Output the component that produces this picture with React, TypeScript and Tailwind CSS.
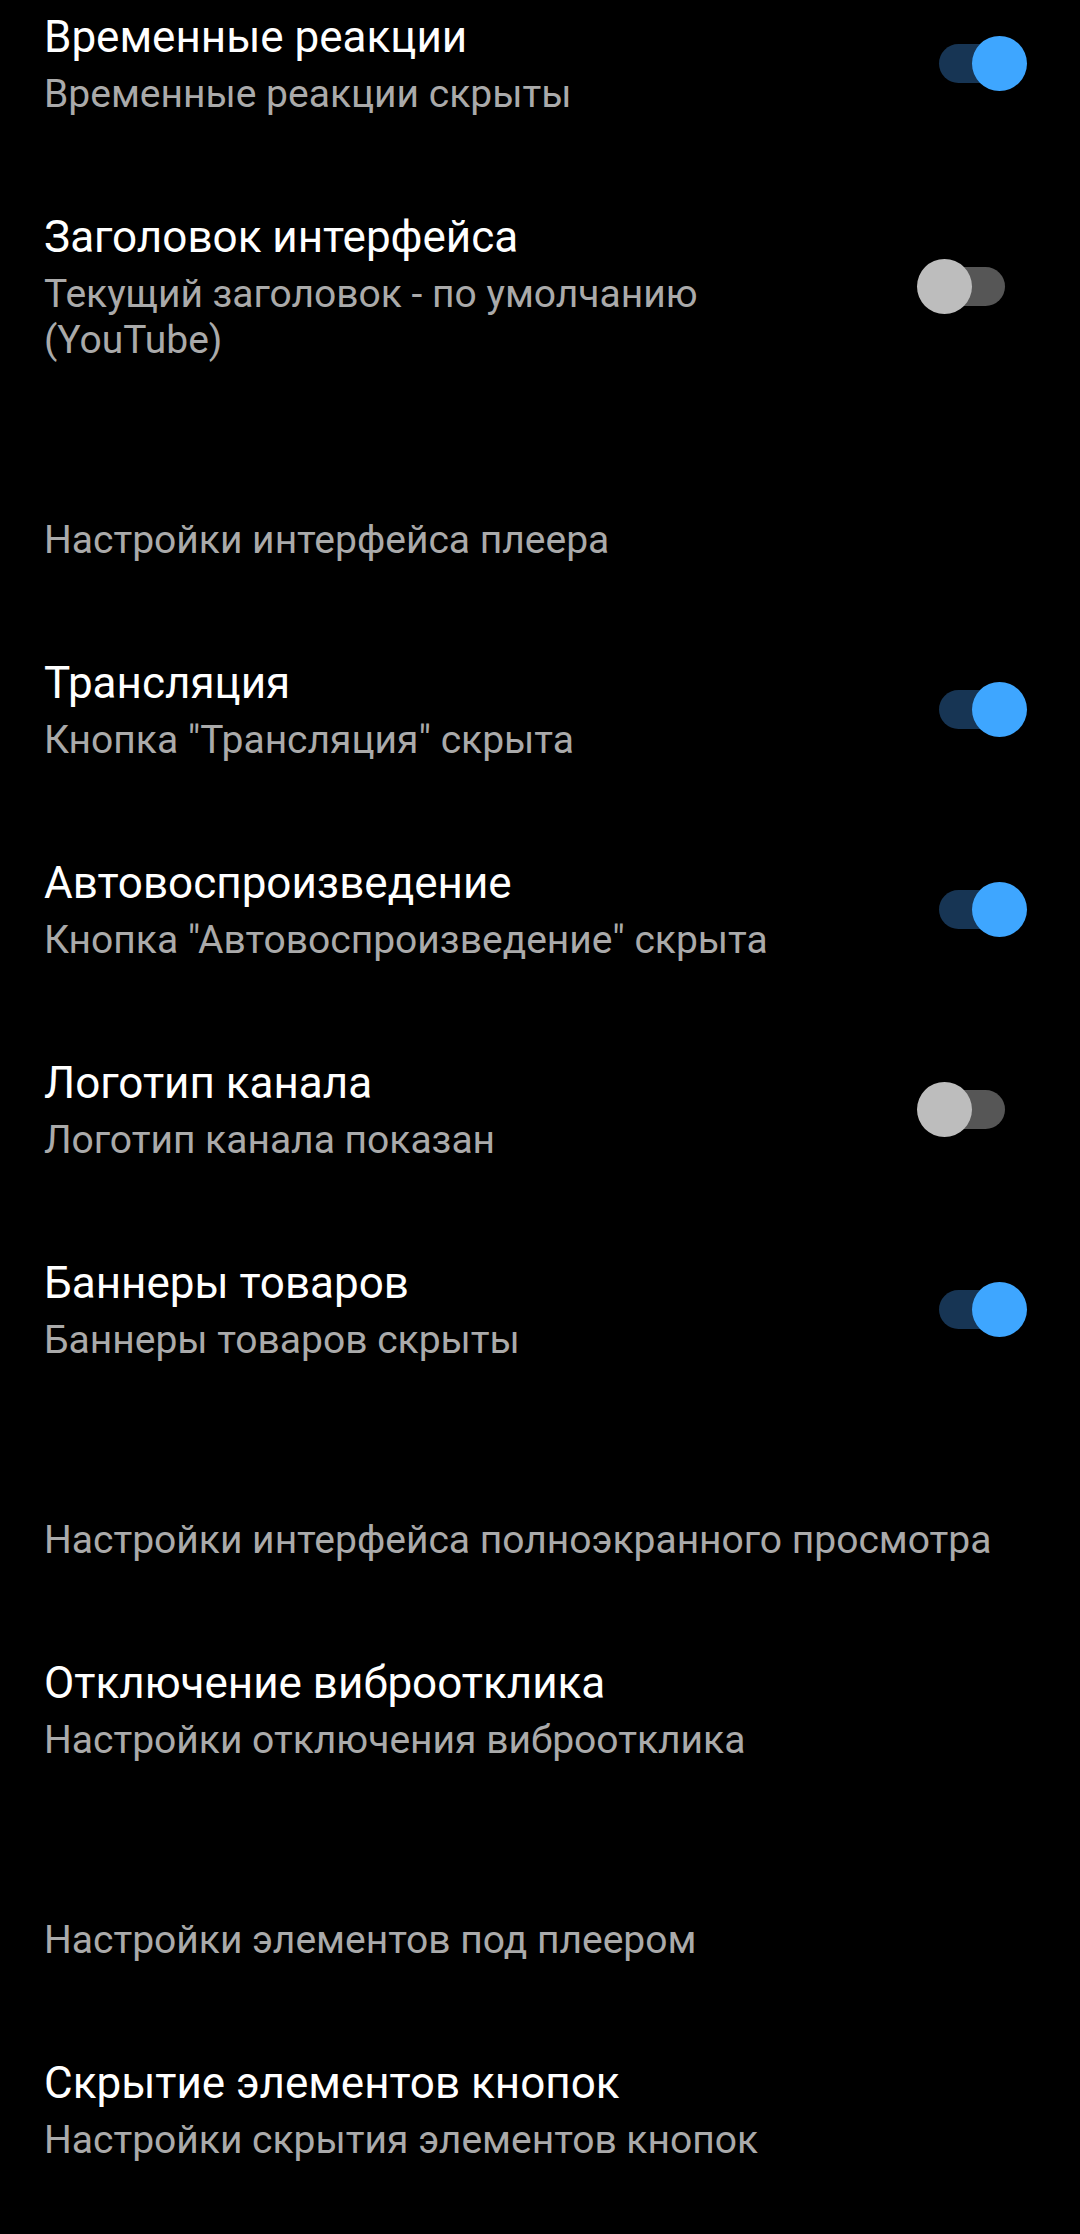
import React from "react";

type Row = {
  kind: "row";
  title: string;
  sub: string;
  toggle?: "on" | "off";
};
type Header = { kind: "header"; text: string };

const items: (Row | Header)[] = [
  { kind: "row", title: "Временные реакции", sub: "Временные реакции скрыты", toggle: "on" },
  { kind: "row", title: "Заголовок интерфейса", sub: "Текущий заголовок - по умолчанию (YouTube)", toggle: "off" },
  { kind: "header", text: "Настройки интерфейса плеера" },
  { kind: "row", title: "Трансляция", sub: 'Кнопка "Трансляция" скрыта', toggle: "on" },
  { kind: "row", title: "Автовоспроизведение", sub: 'Кнопка "Автовоспроизведение" скрыта', toggle: "on" },
  { kind: "row", title: "Логотип канала", sub: "Логотип канала показан", toggle: "off" },
  { kind: "row", title: "Баннеры товаров", sub: "Баннеры товаров скрыты", toggle: "on" },
  { kind: "header", text: "Настройки интерфейса полноэкранного просмотра" },
  { kind: "row", title: "Отключение виброотклика", sub: "Настройки отключения виброотклика" },
  { kind: "header", text: "Настройки элементов под плеером" },
  { kind: "row", title: "Скрытие элементов кнопок", sub: "Настройки скрытия элементов кнопок" },
];

function Switch({ on }: { on: boolean }) {
  return on ? (
    <div className="flex items-center w-[110px] shrink-0">
      <div className="ml-[22px] w-[80px] h-[39px] rounded-full bg-[#173554] shrink-0" />
      <div className="-ml-[47px] w-[55px] h-[55px] rounded-full bg-[#3ea6ff] shrink-0" />
    </div>
  ) : (
    <div className="flex items-center w-[110px] shrink-0">
      <div className="relative z-10 w-[55px] h-[55px] rounded-full bg-[#bdbdbd] shrink-0" />
      <div className="-ml-[47px] w-[80px] h-[39px] rounded-full bg-[#565656] shrink-0" />
    </div>
  );
}

export default function App() {
  return (
    <div
      className="min-h-screen bg-black overflow-hidden"
      style={{ fontFamily: "Roboto, 'Noto Sans', sans-serif" }}
    >
      <div className="-mt-[37px]">
        {items.map((it, i) =>
          it.kind === "header" ? (
            <div key={i} className="pl-[44px] pt-[108px] pb-[46px] text-[39px] leading-[46px] text-[#aaaaaa]">
              {it.text}
            </div>
          ) : (
            <div key={i} className="flex items-center pl-[44px] pr-[53px] py-[46px]">
              <div className="flex-1 min-w-0 pr-[60px]">
                <div className="text-[44px] leading-[56px] text-white">{it.title}</div>
                <div className="mt-[6px] text-[39px] leading-[46px] text-[#aaaaaa]">{it.sub}</div>
              </div>
              {it.toggle && <Switch on={it.toggle === "on"} />}
            </div>
          )
        )}
      </div>
    </div>
  );
}
